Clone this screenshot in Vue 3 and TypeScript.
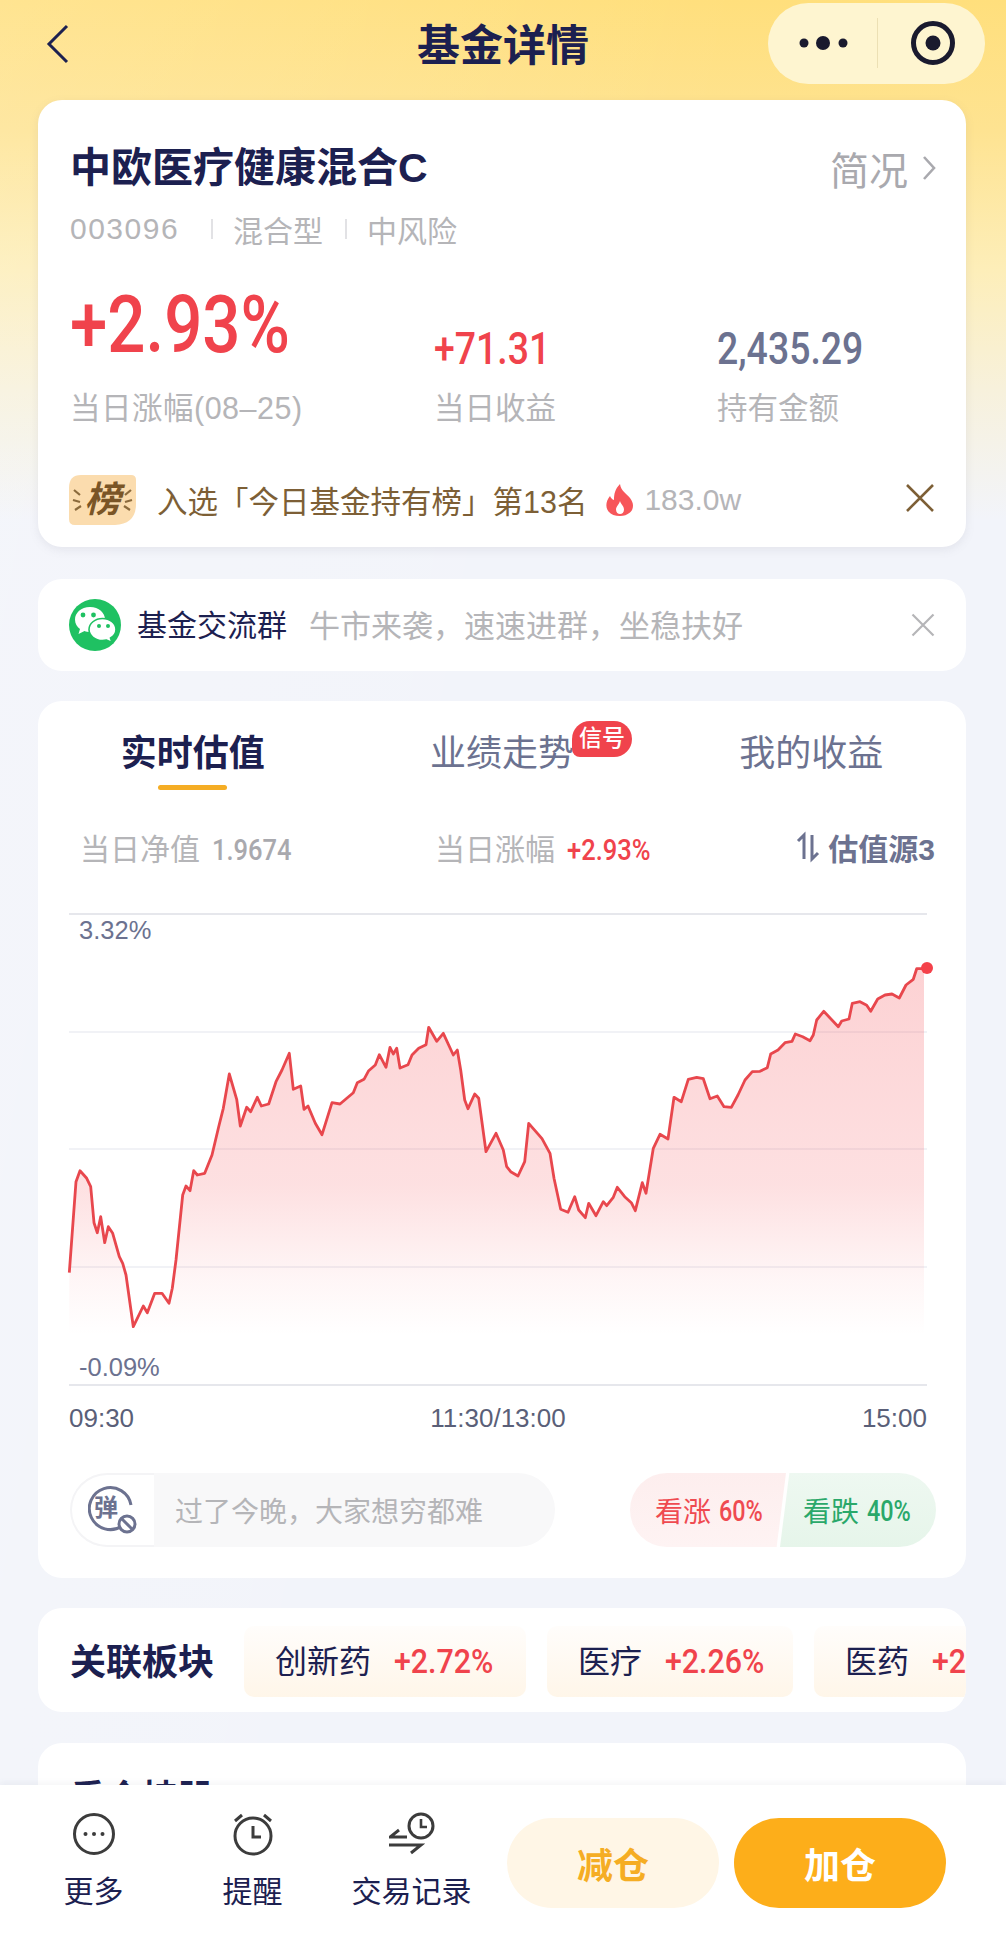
<script setup lang="ts">
import { computed } from 'vue'

interface Chip {
  name: string
  pct: string
  width: number
}

// 折线数据，单位是 1/3 像素，从截图上量出来的
const linePoints: [number, number][] = [
  [58,1118],[78,845],[90,812],[110,835],[122,860],[132,968],[142,998],[152,950],[164,1028],[175,980],[188,1000],[208,1070],[218,1090],[228,1125],[250,1280],[280,1218],[292,1238],[314,1180],[336,1180],[357,1210],[367,1165],[378,1080],[398,885],[408,858],[420,872],[431,812],[442,825],[464,820],[486,765],[506,680],[520,625],[538,522],[560,598],[571,678],[590,622],[602,635],[622,592],[634,618],[656,612],[678,545],[696,510],[718,460],[730,568],[752,558],[762,628],[774,618],[796,670],[816,704],[846,608],[870,612],[910,578],[922,548],[942,538],[956,512],[976,495],[988,464],[1008,502],[1020,442],[1030,462],[1040,445],[1050,504],[1074,494],[1086,465],[1106,445],[1128,434],[1136,382],[1160,424],[1180,400],[1210,465],[1222,450],[1232,510],[1244,600],[1254,626],[1274,582],[1286,595],[1308,755],[1338,700],[1360,750],[1370,800],[1382,815],[1404,828],[1424,785],[1436,670],[1476,716],[1500,760],
  [1512,835],[1532,928],[1554,937],[1574,890],[1586,930],[1606,953],[1616,910],[1638,947],[1660,905],[1670,917],[1690,892],[1702,862],[1724,890],[1744,908],[1756,932],[1777,848],[1788,880],[1810,745],[1830,703],[1854,717],[1872,592],[1894,605],[1915,538],[1940,532],[1960,536],[1980,596],[2002,588],[2022,620],[2044,622],[2064,585],[2085,540],[2107,515],[2130,514],[2152,503],[2162,462],[2184,450],[2205,428],[2226,424],[2236,402],[2258,410],[2280,422],[2290,405],[2300,360],[2321,334],[2365,380],[2375,363],[2397,357],[2407,310],[2430,305],[2450,316],[2462,334],[2483,297],[2505,285],[2526,282],[2548,294],[2568,255],[2590,238],[2600,206],[2622,206]
]

const chartPoints = linePoints.map(([x, y]) => [x / 3 + 50, y / 3 + 900])

const linePath = computed(() =>
  chartPoints.map(([x, y], i) => `${i ? 'L' : 'M'}${x.toFixed(1)} ${y.toFixed(1)}`).join(' ')
)

const areaPath = computed(() => `${linePath.value} L924 1345 L69 1345 Z`)

const gridLines = [914, 1032, 1149, 1267, 1385]

const chips: Chip[] = [
  { name: '创新药', pct: '+2.72%', width: 282 },
  { name: '医疗', pct: '+2.26%', width: 246 },
  { name: '医药', pct: '+2.18%', width: 246 }
]
</script>

<template>
  <div class="page">
    <div class="scroll">
      <header class="nav">
        <svg class="nav-back" width="26" height="42" viewBox="0 0 26 42">
          <path d="M22 3 L4 21 L22 39" fill="none" stroke="#1c2050" stroke-width="3" />
        </svg>
        <div class="nav-title">基金详情</div>
        <div class="capsule">
          <svg width="52" height="20" viewBox="0 0 52 20">
            <circle cx="6" cy="10" r="4.500" fill="#1a1a2e" />
            <circle cx="25" cy="10" r="7" fill="#1a1a2e" />
            <circle cx="45" cy="10" r="4.500" fill="#1a1a2e" />
          </svg>
          <i class="capsule-line"></i>
          <svg width="46" height="46" viewBox="0 0 46 46">
            <circle cx="23" cy="23" r="19.500" fill="none" stroke="#1a1a2e" stroke-width="5" />
            <circle cx="23" cy="23" r="7.500" fill="#1a1a2e" />
          </svg>
        </div>
      </header>

      <section class="card fund">
        <div class="fund-head">
          <div class="fund-name">中欧医疗健康混合C</div>
          <div class="fund-brief">
            简况
            <svg width="14" height="26" viewBox="0 0 14 26">
              <path d="M2 2 L12 13 L2 24" fill="none" stroke="#a9a9ae" stroke-width="2.600" />
            </svg>
          </div>
        </div>
        <div class="fund-meta">
          <span class="meta-code">003096</span>
          <i></i>
          <span>混合型</span>
          <i></i>
          <span>中风险</span>
        </div>
        <div class="stats">
          <div class="stat stat-first">
            <div class="stat-value big red"><span>+2.93%</span></div>
            <div class="stat-label">当日涨幅(08–25)</div>
          </div>
          <div class="stat stat-second">
            <div class="stat-value red"><span>+71.31</span></div>
            <div class="stat-label">当日收益</div>
          </div>
          <div class="stat">
            <div class="stat-value slate"><span>2,435.29</span></div>
            <div class="stat-label">持有金额</div>
          </div>
        </div>
        <div class="rank">
          <div class="rank-badge">
            <svg width="67" height="52" viewBox="0 0 67 52">
              <path d="M12 1 H62 Q67 1 67 6 V30 Q67 50 46 51 H6 Q0 51 0 45 V14 Q0 1 12 1 Z" fill="#fbdcae" />
              <path d="M5 16 l6 5 M4 26 l7 2 M6 36 l6 -4 M62 16 l-6 5 M63 26 l-7 2 M61 36 l-6 -4" stroke="#8b6a3c" stroke-width="2.200" fill="none" />
            </svg>
            <span>榜</span>
          </div>
          <span class="rank-text">入选「今日基金持有榜」第13名</span>
          <svg class="rank-fire" width="28" height="32" viewBox="0 0 28 32">
            <path d="M14 0 C15 7 20 9 24 14 C28 19 28 25 24 28.500 C21 31 18 32 14 32 C9 32 5 30.500 2.500 27.500 C-1 23 0 17 4 12 C5 14 6 15.500 8 16 C8 10 9 5 14 0 Z" fill="#f7565a" />
            <path d="M14 17 C14.500 20 18 22 18 25.500 C18 28.500 16 30 14 30 C12 30 10 28.500 10 25.500 C10 22.500 13 20.500 14 17 Z" fill="#fff" />
          </svg>
          <span class="rank-hot">183.0w</span>
          <svg class="rank-close" width="30" height="30" viewBox="0 0 30 30">
            <path d="M2 2 L28 28 M28 2 L2 28" stroke="#7d5f36" stroke-width="2.600" fill="none" />
          </svg>
        </div>
      </section>

      <section class="card group">
        <svg width="52" height="52" viewBox="0 0 52 52">
          <circle cx="26" cy="26" r="26" fill="#1fc162" />
          <path d="M21 8 C12 8 6 14 6 20.500 C6 24.500 8 28 11 30 L9.500 35 L15.500 32 C17 32.700 19 33 21 33 C30 33 36 27 36 20.500 C36 14 30 8 21 8 Z" fill="#fff" />
          <path d="M33.500 19.500 C26 19.500 20 24.500 20 30.500 C20 36.500 26 41.500 33.500 41.500 C35 41.500 36.500 41.300 37.500 41 L43 43.500 L41.500 39 C45 37 47 34 47 30.500 C47 24.500 41 19.500 33.500 19.500 Z" fill="#fff" stroke="#1fc162" stroke-width="1.600" />
          <circle cx="14" cy="16" r="2.400" fill="#1fc162" />
          <circle cx="24.500" cy="16" r="2.400" fill="#1fc162" />
          <circle cx="30" cy="27" r="2" fill="#1fc162" />
          <circle cx="39" cy="27" r="2" fill="#1fc162" />
        </svg>
        <span class="group-name">基金交流群</span>
        <span class="group-desc">牛市来袭，速速进群，坐稳扶好</span>
        <svg class="group-close" width="24" height="24" viewBox="0 0 24 24">
          <path d="M1.500 1.500 L22.500 22.500 M22.500 1.500 L1.500 22.500" stroke="#b5b5b8" stroke-width="2.200" fill="none" />
        </svg>
      </section>

      <section class="card trend">
        <div class="tabs">
          <div class="tab active">
            <span>实时估值</span>
            <i></i>
          </div>
          <div class="tab">
            <span class="tab-label">业绩走势<em class="tab-badge">信号</em></span>
            <i></i>
          </div>
          <div class="tab">
            <span>我的收益</span>
            <i></i>
          </div>
        </div>

        <div class="quote">
          <div class="quote-item">当日净值<b class="gray-num">1.9674</b></div>
          <div class="quote-item">当日涨幅<b class="red">+2.93%</b></div>
          <div class="quote-source">
            <svg width="24" height="32" viewBox="0 0 24 32">
              <path d="M8 28 V4 L2 10" fill="none" stroke="#6c7290" stroke-width="3" />
              <path d="M16 4 V28 L22 22" fill="none" stroke="#6c7290" stroke-width="3" />
            </svg>
            估值源3
          </div>
        </div>

        <svg class="chart" width="928" height="490" viewBox="38 910 928 490">
          <defs>
            <linearGradient id="areaFill" gradientUnits="userSpaceOnUse" x1="0" y1="960" x2="0" y2="1335">
              <stop offset="0" stop-color="#f5484f" stop-opacity="0.25" />
              <stop offset="0.6" stop-color="#f5484f" stop-opacity="0.17" />
              <stop offset="0.85" stop-color="#f5484f" stop-opacity="0.05" />
              <stop offset="1" stop-color="#f5484f" stop-opacity="0" />
            </linearGradient>
          </defs>
          <line
            v-for="(y, i) in gridLines"
            :key="y"
            x1="69"
            x2="927"
            :y1="y"
            :y2="y"
            :stroke="i === 0 || i === 4 ? '#e6e7ec' : '#f1f2f6'"
            stroke-width="2"
          />
          <path :d="areaPath" fill="url(#areaFill)" />
          <path :d="linePath" fill="none" stroke="#e8474d" stroke-width="2.800" stroke-linejoin="round" />
          <circle cx="927" cy="968" r="6" fill="#f4414a" />
          <text x="79" y="939" class="chart-text">3.32%</text>
          <text x="79" y="1376" class="chart-text">-0.09%</text>
        </svg>

        <div class="axis">
          <span>09:30</span>
          <span>11:30/13:00</span>
          <span>15:00</span>
        </div>

        <div class="actions">
          <div class="danmu">
            <div class="danmu-icon">
              <svg width="50" height="50" viewBox="0 0 50 50">
                <path d="M34 41 A21 21 0 1 1 43 20" fill="none" stroke="#6c7290" stroke-width="3" />
                <circle cx="39" cy="39" r="8" fill="#fff" stroke="#6c7290" stroke-width="3" />
                <path d="M34 34 L44 44" stroke="#6c7290" stroke-width="3" />
              </svg>
              <span>弹</span>
            </div>
            <span class="danmu-text">过了今晚，大家想穷都难</span>
          </div>
          <div class="vote">
            <div class="vote-up">看涨 <b>60%</b></div>
            <div class="vote-down">看跌 <b>40%</b></div>
          </div>
        </div>
      </section>

      <section class="card sector">
        <div class="sector-title">关联板块</div>
        <div class="chips">
          <div v-for="chip in chips" :key="chip.name" class="chip" :style="{ width: chip.width + 'px' }">
            <span class="chip-name">{{ chip.name }}</span>
            <span class="chip-pct red">{{ chip.pct }}</span>
          </div>
        </div>
      </section>

      <section class="card holdings">
        <div class="holdings-title">重仓持股</div>
      </section>
    </div>

    <footer class="bar">
      <div class="bar-item">
        <svg width="46" height="46" viewBox="0 0 46 46">
          <circle cx="23" cy="23" r="19.500" fill="none" stroke="#3c3c3c" stroke-width="3" />
          <circle cx="14.500" cy="23" r="2" fill="#3c3c3c" />
          <circle cx="23" cy="23" r="2" fill="#3c3c3c" />
          <circle cx="31.500" cy="23" r="2" fill="#3c3c3c" />
        </svg>
        <span>更多</span>
      </div>
      <div class="bar-item">
        <svg width="46" height="46" viewBox="0 0 46 46">
          <circle cx="23" cy="25" r="18" fill="none" stroke="#3c3c3c" stroke-width="3" />
          <path d="M23 15 V26 H31" fill="none" stroke="#3c3c3c" stroke-width="3" />
          <path d="M5 10 L12 4 M41 10 L34 4" stroke="#3c3c3c" stroke-width="3" fill="none" />
        </svg>
        <span>提醒</span>
      </div>
      <div class="bar-item">
        <svg width="46" height="46" viewBox="0 0 46 46">
          <circle cx="32" cy="15" r="12" fill="none" stroke="#3c3c3c" stroke-width="3" />
          <path d="M32 8 V16 H38" fill="none" stroke="#3c3c3c" stroke-width="2.600" />
          <path d="M18 26 H1 L10 19" fill="none" stroke="#3c3c3c" stroke-width="3" />
          <path d="M0 34 H32 L22 42" fill="none" stroke="#3c3c3c" stroke-width="3" />
        </svg>
        <span>交易记录</span>
      </div>
      <button class="btn btn-sell">减仓</button>
      <button class="btn btn-buy">加仓</button>
    </footer>
  </div>
</template>

<style>
html,
body {
  margin: 0;
  background: #f2f4fa;
}
</style>

<style scoped>
.page {
  width: 1006px;
  height: 1942px;
  overflow: hidden;
  font-family: "Liberation Sans", "Noto Sans CJK SC", sans-serif;
  color: #1c2050;
  background:
    linear-gradient(100deg, rgba(255, 255, 255, 0.16) 0, rgba(255, 255, 255, 0) 55%),
    linear-gradient(180deg, #ffdf7c 0, #fee391 130px, #fdeeb9 270px, #f7f1dc 390px, #f2f4fa 520px, #f2f4fa 100%);
}

.scroll {
  height: 1785px;
  overflow: hidden;
}

.nav {
  height: 100px;
  display: grid;
  grid-template-columns: 1fr auto 1fr;
  align-items: center;
  padding-bottom: 10px;
  box-sizing: border-box;
}

.nav-back {
  margin-left: 45px;
  margin-top: -3px;
}

.nav-title {
  font-size: 43px;
  font-weight: 700;
  line-height: 60px;
  margin-top: 2px;
}

.capsule {
  justify-self: end;
  width: 217px;
  height: 81px;
  margin-right: 21px;
  margin-top: -4px;
  border-radius: 41px;
  background: #fef5d0;
  display: flex;
  align-items: center;
  box-sizing: border-box;
  padding-left: 30px;
}

.capsule-line {
  width: 1px;
  height: 50px;
  background: #ece0b4;
  margin: 0 32px 0 27px;
}

.card {
  width: 928px;
  margin: 0 0 30px 38px;
  background: #fff;
  border-radius: 24px;
  box-sizing: border-box;
}

.fund {
  height: 447px;
  padding: 44px 30px 0 32px;
  margin-bottom: 32px;
  box-shadow: 0 3px 10px rgba(120, 120, 140, 0.12);
}

.fund-head {
  display: flex;
  justify-content: space-between;
  align-items: center;
  height: 48px;
}

.fund-name {
  font-size: 41px;
  font-weight: 700;
  line-height: 48px;
}

.fund-brief {
  display: flex;
  align-items: center;
  gap: 14px;
  font-size: 39px;
  color: #a9a9ae;
}

.fund-meta {
  display: flex;
  align-items: center;
  height: 40px;
  margin-top: 17px;
  font-size: 30px;
  color: #b5b5b8;
}

.meta-code {
  font-size: 30px;
  letter-spacing: 1.500px;
  margin-right: 10px;
}

.fund-meta i {
  width: 2px;
  height: 20px;
  background: #e2e2e5;
  margin: 0 20px 0 22px;
}

.stats {
  display: flex;
  margin-top: 33px;
}

.stat-first {
  width: 364px;
}

.stat-second {
  width: 283px;
}

.stat-value {
  height: 90px;
  line-height: 46px;
  display: flex;
  align-items: flex-end;
  font-family: Roboto, sans-serif;
  font-size: 44px;
  font-weight: 500;
}

.stat-value span {
  transform: scaleX(0.85);
  transform-origin: left center;
  white-space: nowrap;
}

.stat-value.big {
  font-size: 80px;
  line-height: 86px;
}

.stat-value.big span {
  transform: scaleX(0.84);
  margin-bottom: 4px;
}

.stat-label {
  margin-top: 16px;
  font-size: 30.500px;
  line-height: 40px;
  color: #b5b5b8;
}

.stat-first .stat-label {
  letter-spacing: 0.500px;
}

.red {
  color: #f0434c;
}

.slate {
  color: #6c7290;
}

.rank {
  display: flex;
  align-items: center;
  height: 60px;
  margin-top: 42px;
  margin-left: -1px;
}

.rank-badge {
  position: relative;
  width: 67px;
  height: 52px;
}

.rank-badge svg {
  display: block;
}

.rank-badge span {
  position: absolute;
  left: 0;
  right: 0;
  top: 4px;
  text-align: center;
  font-size: 36px;
  line-height: 44px;
  font-weight: 700;
  font-style: italic;
  color: #7a5526;
}

.rank-text {
  margin-left: 21px;
  font-size: 30.500px;
  color: #7d5f36;
  white-space: nowrap;
}

.rank-fire {
  margin-left: 19px;
}

.rank-hot {
  margin-left: 10px;
  font-size: 30px;
  color: #b5b5b8;
}

.rank-close {
  margin-left: auto;
  margin-right: 1px;
  margin-top: -4px;
}

.group {
  height: 92px;
  display: flex;
  align-items: center;
  padding: 0 31px 0 31px;
}

.group-name {
  margin-left: 16px;
  margin-top: -4px;
  font-size: 30px;
  white-space: nowrap;
}

.group-desc {
  margin-left: 22px;
  margin-top: -4px;
  font-size: 31px;
  color: #b5b5b8;
  white-space: nowrap;
}

.group-close {
  margin-left: auto;
}

.trend {
  height: 877px;
  padding-top: 28px;
}

.tabs {
  display: grid;
  grid-template-columns: repeat(3, 1fr);
}

.tab {
  display: flex;
  flex-direction: column;
  align-items: center;
  font-size: 36px;
  line-height: 50px;
  color: #6c7290;
}

.tab i {
  width: 69px;
  height: 5px;
  margin-top: 6px;
  border-radius: 3px;
}

.tab.active {
  color: #1c2050;
  font-weight: 700;
}

.tab.active i {
  background: #f5ad24;
}

.tab-label {
  position: relative;
}

.tab-badge {
  position: absolute;
  left: 142px;
  top: -8px;
  width: 60px;
  height: 36px;
  border-radius: 18px 18px 18px 8px;
  background: #f0434c;
  color: #fff;
  font-size: 23px;
  font-weight: 500;
  font-style: normal;
  line-height: 34px;
  text-align: center;
}

.quote {
  display: flex;
  align-items: center;
  height: 40px;
  margin-top: 37px;
  padding: 0 31px 0 42px;
  font-size: 30px;
  color: #b5b5b8;
}

.quote-item {
  width: 355px;
  white-space: nowrap;
}

.quote-item b {
  display: inline-block;
  margin-left: 12px;
  font-family: Roboto, sans-serif;
  font-size: 29px;
  font-weight: 500;
  transform: scaleX(0.88);
  transform-origin: left center;
}

.quote-item .gray-num {
  color: #a9a9ae;
}

.quote-source {
  display: flex;
  align-items: center;
  gap: 8px;
  margin-left: auto;
  color: #6c7290;
  font-weight: 700;
  white-space: nowrap;
}

.chart {
  display: block;
  margin-top: 43px;
}

.chart-text {
  font-family: "Liberation Sans", sans-serif;
  font-size: 25.500px;
  fill: #6c7290;
}

.axis {
  display: flex;
  justify-content: space-between;
  padding: 0 39px 0 31px;
  font-size: 26px;
  line-height: 36px;
  color: #5a5f78;
}

.actions {
  display: flex;
  justify-content: space-between;
  margin-top: 37px;
  padding: 0 30px 0 32px;
}

.danmu {
  width: 485px;
  height: 74px;
  border-radius: 37px;
  background: #f8f8f9;
  display: flex;
  align-items: center;
  overflow: hidden;
}

.danmu-icon {
  position: relative;
  width: 84px;
  height: 74px;
  background: #fff;
  border: 2px solid #f4f4f6;
  border-right: none;
  border-radius: 37px 0 0 37px;
  box-sizing: border-box;
  display: flex;
  align-items: center;
  justify-content: center;
}

.danmu-icon span {
  position: absolute;
  left: 22px;
  top: 16px;
  font-size: 24px;
  line-height: 34px;
  font-weight: 700;
  color: #6c7290;
}

.danmu-text {
  margin-left: 21px;
  font-size: 28px;
  color: #b5b5b8;
  white-space: nowrap;
}

.vote {
  display: flex;
  width: 306px;
  height: 74px;
}

.vote-up,
.vote-down {
  width: 156px;
  height: 74px;
  display: flex;
  align-items: center;
  font-size: 28px;
  white-space: pre;
  box-sizing: border-box;
}

.vote b {
  font-family: Roboto, sans-serif;
  font-size: 30px;
  font-weight: 500;
  transform: scaleX(0.78);
  transform-origin: left center;
}

.vote-up {
  color: #ef4a50;
  padding-left: 25px;
  background: linear-gradient(180deg, #fdeeee, #fef3f3);
  border-radius: 37px 0 0 37px;
  clip-path: polygon(0 0, 100% 0, 94% 100%, 0 100%);
}

.vote-down {
  color: #2aa86a;
  margin-left: -6px;
  padding-left: 23px;
  background: linear-gradient(180deg, #eef8f1, #e6f5ea);
  border-radius: 0 37px 37px 0;
  clip-path: polygon(6% 0, 100% 0, 100% 100%, 0 100%);
}

.sector {
  height: 104px;
  display: flex;
  align-items: center;
  padding-left: 32px;
  overflow: hidden;
  margin-bottom: 31px;
}

.sector-title {
  flex-shrink: 0;
  width: 174px;
  font-size: 36px;
  font-weight: 700;
  margin-top: -2px;
}

.chips {
  display: flex;
  gap: 21px;
  padding-top: 3px;
}

.chip {
  flex-shrink: 0;
  height: 71px;
  box-sizing: border-box;
  padding: 0 0 4px 31px;
  display: flex;
  align-items: center;
  gap: 23px;
  border-radius: 10px;
  background: linear-gradient(180deg, #fffdfb, #fff6e9);
  white-space: nowrap;
}

.chip-name {
  font-size: 32px;
  margin-top: -2px;
}

.chip-pct {
  font-family: Roboto, sans-serif;
  font-size: 33px;
  font-weight: 500;
  margin-top: 4px;
  transform: scaleX(0.92);
  transform-origin: left center;
}

.holdings {
  height: 300px;
  padding: 32px 32px 0;
}

.holdings-title {
  font-size: 36px;
  line-height: 48px;
  font-weight: 700;
}

.bar {
  height: 157px;
  background: #fff;
  display: flex;
  align-items: flex-start;
  padding-left: 14px;
  box-shadow: 0 -2px 6px rgba(120, 120, 140, 0.08);
  position: relative;
}

.bar-item {
  width: 159px;
  padding-top: 26px;
  display: flex;
  flex-direction: column;
  align-items: center;
  font-size: 30px;
  line-height: 40px;
  white-space: nowrap;
}

.bar-item span {
  margin-top: 15px;
}

.btn {
  width: 212px;
  height: 90px;
  margin-top: 33px;
  border: none;
  border-radius: 45px;
  font-family: inherit;
  font-size: 36px;
  font-weight: 700;
}

.btn-sell {
  margin-left: 16px;
  background: #fff6e6;
  color: #f5ad24;
}

.btn-buy {
  margin-left: 15px;
  background: #fdae1a;
  color: #fff;
}
</style>
